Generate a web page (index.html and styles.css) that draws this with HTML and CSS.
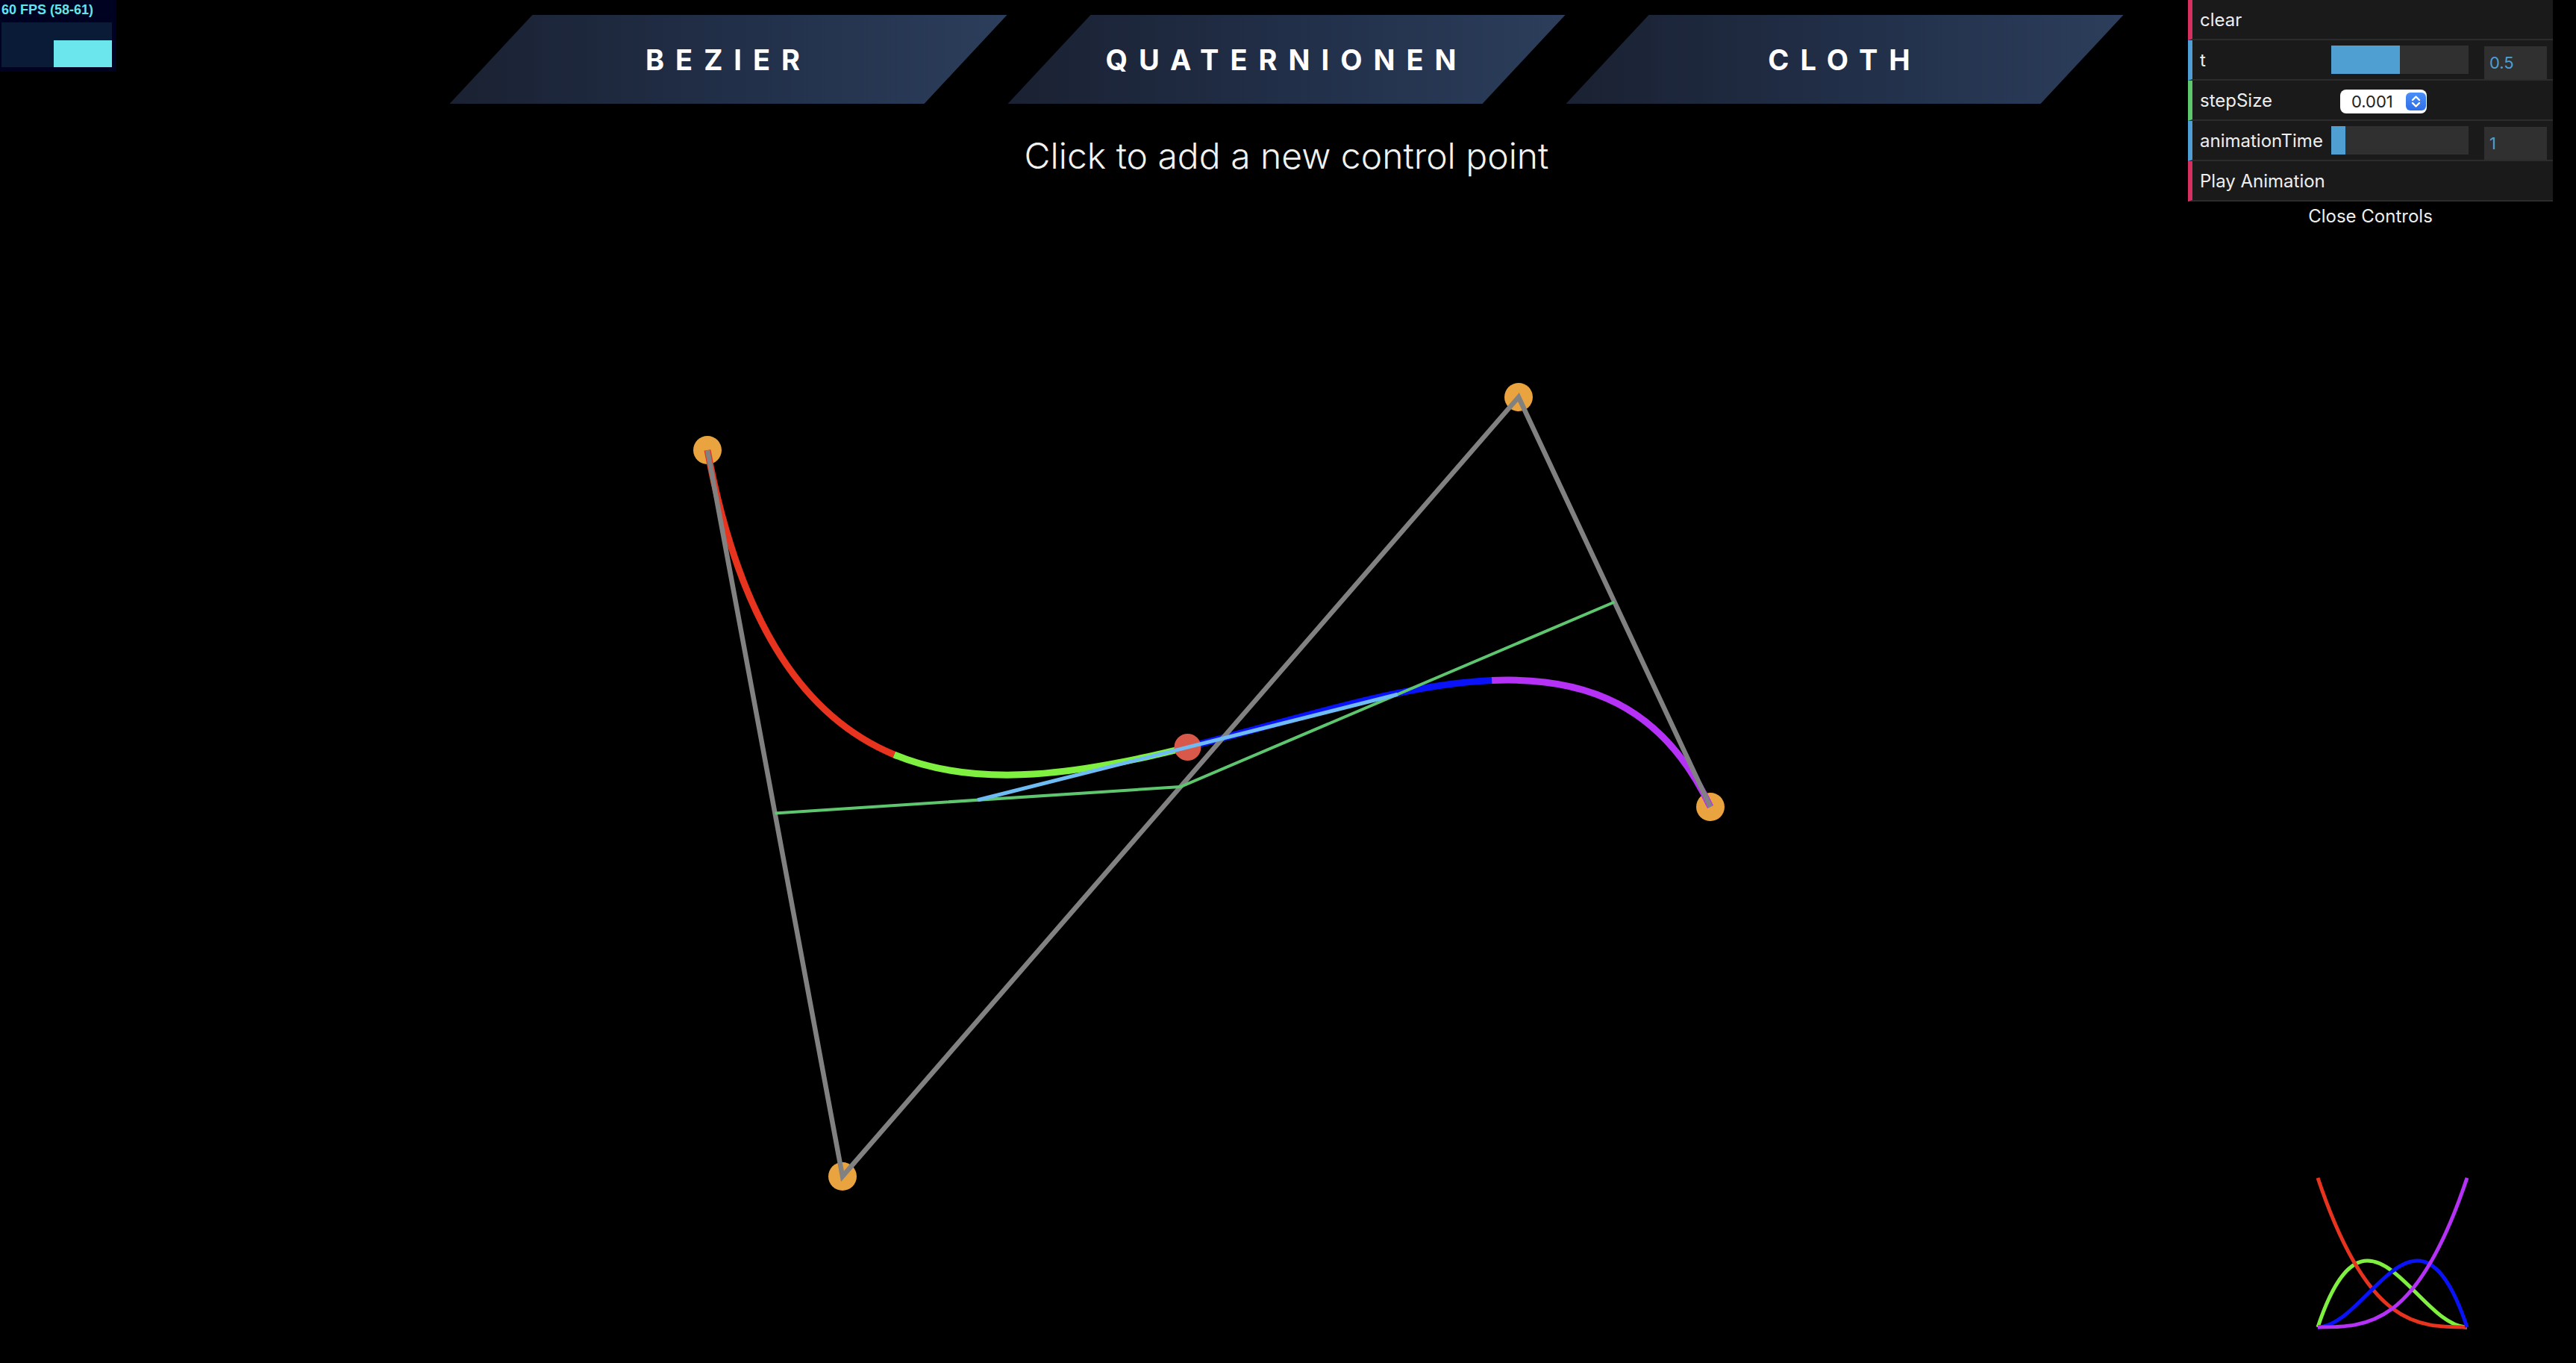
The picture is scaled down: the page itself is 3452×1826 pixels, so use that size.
FILE: index.html
```html
<!DOCTYPE html>
<html lang="de">
<head>
<meta charset="utf-8">
<title>Bezier</title>
<link rel="stylesheet" href="styles.css">
</head>
<body>
<svg class="scene" width="3452" height="1826" viewBox="0 0 3452 1826" xmlns="http://www.w3.org/2000/svg">
  <g class="ctrl-points">
    <circle cx="948" cy="603" r="19"/>
    <circle cx="1129" cy="1576" r="19"/>
    <circle cx="2035" cy="532" r="19"/>
    <circle cx="2292" cy="1081" r="19"/>
  </g>
  <g class="curve">
    <path class="seg-red" d="M948,603 C993.25,846.25 1083.81,963.44 1198.22,1010.97"/>
    <path class="seg-green" d="M1198.22,1010.97 C1312.63,1058.5 1450.88,1036.38 1591.5,1001"/>
    <path class="seg-blue" d="M1591.5,1001 C1732.13,965.63 1875.13,917 1999.03,911.53"/>
    <path class="seg-purple" d="M1999.03,911.53 C2122.94,906.06 2227.75,943.75 2292,1081"/>
  </g>
  <polyline class="hull" points="948,603 1129,1576 2035,532 2292,1081"/>
  <circle class="t-point" cx="1591.5" cy="1001" r="18"/>
  <polyline class="level1" points="1038.5,1089.5 1582,1054 2163.5,806.5"/>
  <polyline class="level2" points="1310.25,1071.75 1872.75,930.25"/>
  <g class="basis">
    <path class="seg-green" d="M3106,1778 C3172.67,1578 3239.33,1778 3306,1778"/>
    <path class="seg-red" d="M3106,1578 C3172.67,1778 3239.33,1778 3306,1778"/>
    <path class="seg-blue" d="M3106,1778 C3172.67,1778 3239.33,1578 3306,1778"/>
    <path class="seg-purple" d="M3106,1778 C3172.67,1778 3239.33,1778 3306,1578"/>
  </g>
</svg>

<div class="stats">
  <div class="fps">60 FPS (58-61)</div>
  <div class="graph"><div class="bar"></div></div>
</div>

<nav class="modes">
  <a class="mode">BEZIER</a>
  <a class="mode">QUATERNIONEN</a>
  <a class="mode">CLOTH</a>
</nav>

<p class="hint">Click to add a new control point</p>

<div class="gui">
  <div class="row fn"><span class="label">clear</span></div>
  <div class="row num">
    <span class="label">t</span>
    <div class="slider"><div class="fill fill-half"></div></div>
    <div class="value">0.5</div>
  </div>
  <div class="row opt">
    <span class="label">stepSize</span>
    <div class="select">
      <span class="select-text">0.001</span>
      <span class="stepper">
        <svg width="27" height="24" viewBox="0 0 27 24"><path d="M9 10 L13.5 5.5 L18 10 M9 14 L13.5 18.5 L18 14" fill="none" stroke="#fff" stroke-width="2.4" stroke-linecap="round" stroke-linejoin="round"/></svg>
      </span>
    </div>
  </div>
  <div class="row num">
    <span class="label">animationTime</span>
    <div class="slider"><div class="fill fill-small"></div></div>
    <div class="value">1</div>
  </div>
  <div class="row fn"><span class="label">Play Animation</span></div>
  <div class="close">Close Controls</div>
</div>
</body>
</html>
```
FILE: styles.css
```css
html, body {
  margin: 0;
  padding: 0;
  background: #000;
}
body {
  width: 3452px;
  height: 1826px;
  overflow: hidden;
  position: relative;
  font-family: "Inter", "Liberation Sans", sans-serif;
}

/* drawing canvas */
.scene {
  position: absolute;
  top: 0;
  left: 0;
}
.ctrl-points circle { fill: #eaa43f; }
.curve path, .basis path { fill: none; stroke-linecap: butt; }
.curve path { stroke-width: 9; }
.basis path { stroke-width: 5; }
.seg-red { stroke: #e8341f; }
.seg-green { stroke: #7ff03f; }
.seg-blue { stroke: #0a12f7; }
.seg-purple { stroke: #b531f6; }
.hull { fill: none; stroke: #818181; stroke-width: 6.5; stroke-linejoin: miter; }
.t-point { fill: #d8594a; }
.level1 { fill: none; stroke: #5fc670; stroke-width: 4; }
.level2 { fill: none; stroke: #6fbcf5; stroke-width: 5; }

/* fps meter */
.stats {
  position: absolute;
  top: 0;
  left: 0;
  width: 156px;
  height: 96px;
  background: #000222;
  z-index: 2;
}
.fps {
  font-family: "Liberation Sans", Arial, sans-serif;
  font-weight: 700;
  font-size: 18px;
  line-height: 22px;
  color: #63e3ea;
  padding: 2px 0 0 2px;
  height: 28px;
  box-sizing: border-box;
}
.graph {
  margin: 2px 0 0 2px;
  width: 148px;
  height: 60px;
  background: #0a1b37;
  display: flex;
  justify-content: flex-end;
  align-items: flex-end;
}
.bar {
  width: 78px;
  height: 36px;
  background: #6be6ec;
}

/* mode buttons */
.modes {
  position: relative;
  z-index: 1;
  display: flex;
  justify-content: center;
  gap: 1px;
  padding-top: 20px;
  padding-right: 4px;
}
.mode {
  width: 747px;
  height: 119px;
  display: flex;
  align-items: center;
  justify-content: center;
  background: linear-gradient(90deg, #1a2132 0%, #22304a 55%, #2c3e5b 100%);
  clip-path: polygon(111px 0, 100% 0, calc(100% - 111px) 100%, 0 100%);
  color: #fff;
  font-family: "Inter", "Liberation Sans", sans-serif;
  font-weight: 700;
  font-size: 38px;
  letter-spacing: 15px;
  box-sizing: border-box;
}

.hint {
  position: relative;
  z-index: 1;
  margin: 40px 0 0 0;
  padding-right: 4px;
  text-align: center;
  color: #f2f2f2;
  font-family: "Inter", "Liberation Sans", sans-serif;
  font-weight: 300;
  font-size: 48px;
  line-height: 60px;
}

/* controls panel */
.gui {
  position: absolute;
  top: 0;
  right: 31px;
  width: 489px;
  z-index: 3;
  color: #eee;
  font-size: 24px;
}
.row {
  height: 52px;
  background: #1a1a1a;
  border-bottom: 2px solid #2c2c2c;
  border-left: 6px solid #4d9fd6;
  display: flex;
  align-items: center;
  padding-left: 10px;
}
.row.fn { border-left-color: #d5305f; }
.row.num { border-left-color: #4d9fd6; }
.row.opt { border-left-color: #5ec86d; }
.label {
  width: 176px;
  flex: none;
  white-space: nowrap;
  overflow: hidden;
}
.slider {
  width: 184px;
  height: 38px;
  background: #303030;
  flex: none;
}
.fill {
  height: 100%;
  background: #4f9fd2;
}
.fill-half { width: 50%; }
.fill-small { width: 19px; }
.value {
  width: 84px;
  margin-left: 21px;
  align-self: stretch;
  margin-top: 8px;
  background: #303030;
  color: #4f9fd2;
  font-size: 22px;
  display: flex;
  align-items: center;
  padding-left: 7px;
  box-sizing: border-box;
}
.select {
  margin-left: 12px;
  margin-top: 4px;
  width: 116px;
  height: 32px;
  background: #fff;
  border-radius: 8px;
  display: flex;
  align-items: center;
  justify-content: space-between;
  padding: 0 1px 0 15px;
  box-sizing: border-box;
}
.select-text {
  color: #222;
  font-size: 22px;
}
.stepper {
  width: 27px;
  height: 24px;
  border-radius: 6px;
  background: linear-gradient(180deg, #4a8ff9, #2f6ee9);
  display: flex;
}
.close {
  height: 40px;
  line-height: 40px;
  text-align: center;
  background: #000;
  color: #eee;
}
```
